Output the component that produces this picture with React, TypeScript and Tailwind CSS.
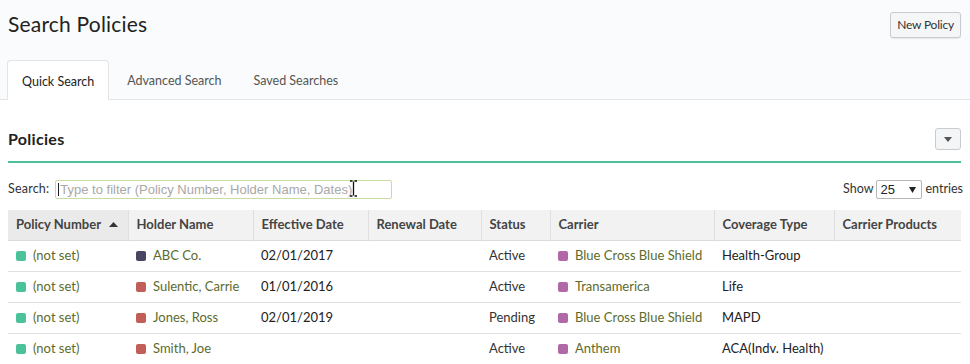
import React from "react";

const rows = [
  { holder: "ABC Co.", holderColor: "bg-[#4a4560]", eff: "02/01/2017", status: "Active", carrier: "Blue Cross Blue Shield", cov: "Health-Group" },
  { holder: "Sulentic, Carrie", holderColor: "bg-[#c25e58]", eff: "01/01/2016", status: "Active", carrier: "Transamerica", cov: "Life" },
  { holder: "Jones, Ross", holderColor: "bg-[#c25e58]", eff: "02/01/2019", status: "Pending", carrier: "Blue Cross Blue Shield", cov: "MAPD" },
  { holder: "Smith, Joe", holderColor: "bg-[#c25e58]", eff: "", status: "Active", carrier: "Anthem", cov: "ACA(Indv. Health)" },
];

const cols = [
  { name: "Policy Number", w: "w-[120px]", sorted: true },
  { name: "Holder Name", w: "w-[125px]" },
  { name: "Effective Date", w: "w-[115px]" },
  { name: "Renewal Date", w: "w-[113px]" },
  { name: "Status", w: "w-[69px]" },
  { name: "Carrier", w: "w-[164px]" },
  { name: "Coverage Type", w: "w-[120px]" },
  { name: "Carrier Products", w: "w-[127px]" },
];

export default function App() {
  return (
    <div className="w-[970px] h-[364px] overflow-hidden bg-white text-[#333] font-['Lato','Open_Sans',sans-serif]">
      <div className="h-[100px] bg-[#f9fbfc] border-b border-[#e2e5e8] flex flex-col">
        <div className="flex items-start justify-between pl-2 pr-[9px] pt-[12px] h-[61px]">
          <h1 className="text-[21px] leading-[22px] text-[#222] mt-[1px] tracking-[0.2px]">Search Policies</h1>
          <button className="h-[26px] px-[6px] text-[12px] text-[#333] bg-[#f4f6f8] border border-[#c8ccd0] rounded-[3px] shadow-[0_1px_1px_rgba(0,0,0,0.08)] tracking-[-0.2px]">
            New Policy
          </button>
        </div>
        <div className="flex gap-1 pl-[7px] h-[39px]">
          <div className="px-[14px] pt-[3px] h-[40px] bg-white border border-b-0 border-[#e2e5e8] rounded-t-[4px] flex items-center text-[12.5px] text-[#222]">
            Quick Search
          </div>
          <div className="px-[14px] pt-[3px] h-[39px] flex items-center text-[12.5px] text-[#555]">Advanced Search</div>
          <div className="px-[14px] pt-[3px] h-[39px] flex items-center text-[12.5px] text-[#555]">Saved Searches</div>
        </div>
      </div>

      <div className="px-2">
        <div className="mt-[28px] flex items-center justify-between h-[22px]">
          <div className="text-[16px] font-bold text-[#222] tracking-[0.3px]">Policies</div>
          <button className="w-[26px] h-[22px] mr-[1px] bg-[#f4f5f6] border border-[#c8ccd0] rounded-[3px] flex items-center justify-center">
            <svg width="8" height="5" viewBox="0 0 8 5"><path d="M0 0h8L4 5z" fill="#555" /></svg>
          </button>
        </div>
        <div className="mt-[11px] h-[2px] bg-[#4dbf9a] mr-[1px]" />

        <div className="mt-[17px] flex items-center justify-between h-[19px] text-[12.5px]">
          <div className="flex items-center gap-[6px]">
            <span className="text-[#333] tracking-[0.2px]">Search:</span>
            <div className="relative w-[337px] h-[19px] border border-[#c6dca0] rounded-[2px] flex items-center pl-[2px]">
              <span className="w-px h-[13px] bg-[#222] mr-[1px]" />
              <span className="text-[13px] text-[#a8a8a8] font-['Liberation_Sans',sans-serif]">
                Type to filter (Policy Number, Holder Name, Dates)
              </span>
              <svg className="absolute left-[293px] top-[-1px]" width="9" height="17" viewBox="0 0 9 17">
                <path d="M1 1h2.5M5.5 1H8M4.5 1.5v14M1 16h2.5M5.5 16H8" stroke="#111" strokeWidth="1.3" fill="none" />
              </svg>
            </div>
          </div>
          <div className="flex items-center gap-[3px] text-[#333]">
            <span>Show</span>
            <div className="w-[46px] h-[19px] border border-[#b5b5b5] rounded-[2px] bg-white flex items-center justify-between pl-[3px] pr-[5px]">
              <span className="text-[13px] text-[#222] font-['Liberation_Sans',sans-serif]">25</span>
              <svg width="7" height="6" viewBox="0 0 7 6"><path d="M0 0h7L3.5 6z" fill="#222" /></svg>
            </div>
            <span className="mr-[-1px]">entries</span>
          </div>
        </div>

        <table className="mt-[11px] table-fixed border-collapse w-[953px] text-[13px]">
          <colgroup>
            {cols.map((c) => (
              <col key={c.name} className={c.w} />
            ))}
          </colgroup>
          <thead>
            <tr className="h-[30px] bg-[#f2f2f2] border-b border-[#dcdcdc]">
              {cols.map((c, i) => (
                <th
                  key={c.name}
                  className={`text-left font-bold text-[#444] px-2 whitespace-nowrap ${i < cols.length - 1 ? "border-r border-[#dfdfdf]" : ""} ${c.sorted ? "bg-[#eaeaea]" : ""}`}
                >
                  {c.sorted ? (
                    <span className="flex items-center gap-[8px]">
                      {c.name}
                      <svg width="9" height="5" viewBox="0 0 9 5"><path d="M0 5h9L4.5 0z" fill="#333" /></svg>
                    </span>
                  ) : (
                    c.name
                  )}
                </th>
              ))}
            </tr>
          </thead>
          <tbody>
            {rows.map((r) => (
              <tr key={r.holder} className="h-[31px] border-b border-[#e1e1e1]">
                <td className="px-2">
                  <span className="flex items-center gap-[7px] text-[#5c6b2c]">
                    <span className="w-[10px] h-[10px] rounded-[2px] bg-[#4cc29b]" />
                    (not set)
                  </span>
                </td>
                <td className="px-2">
                  <span className="flex items-center gap-[7px] text-[#5c6b2c] whitespace-nowrap">
                    <span className={`w-[10px] h-[10px] rounded-[2px] ${r.holderColor}`} />
                    {r.holder}
                  </span>
                </td>
                <td className="px-2 text-[#222]">{r.eff}</td>
                <td className="px-2"></td>
                <td className="px-2 text-[#333]">{r.status}</td>
                <td className="px-2">
                  <span className="flex items-center gap-[7px] text-[#5c6b2c] whitespace-nowrap">
                    <span className="w-[10px] h-[10px] rounded-[2px] bg-[#b068a6]" />
                    {r.carrier}
                  </span>
                </td>
                <td className="px-2 text-[#222]">{r.cov}</td>
                <td className="px-2"></td>
              </tr>
            ))}
          </tbody>
        </table>
      </div>
    </div>
  );
}
